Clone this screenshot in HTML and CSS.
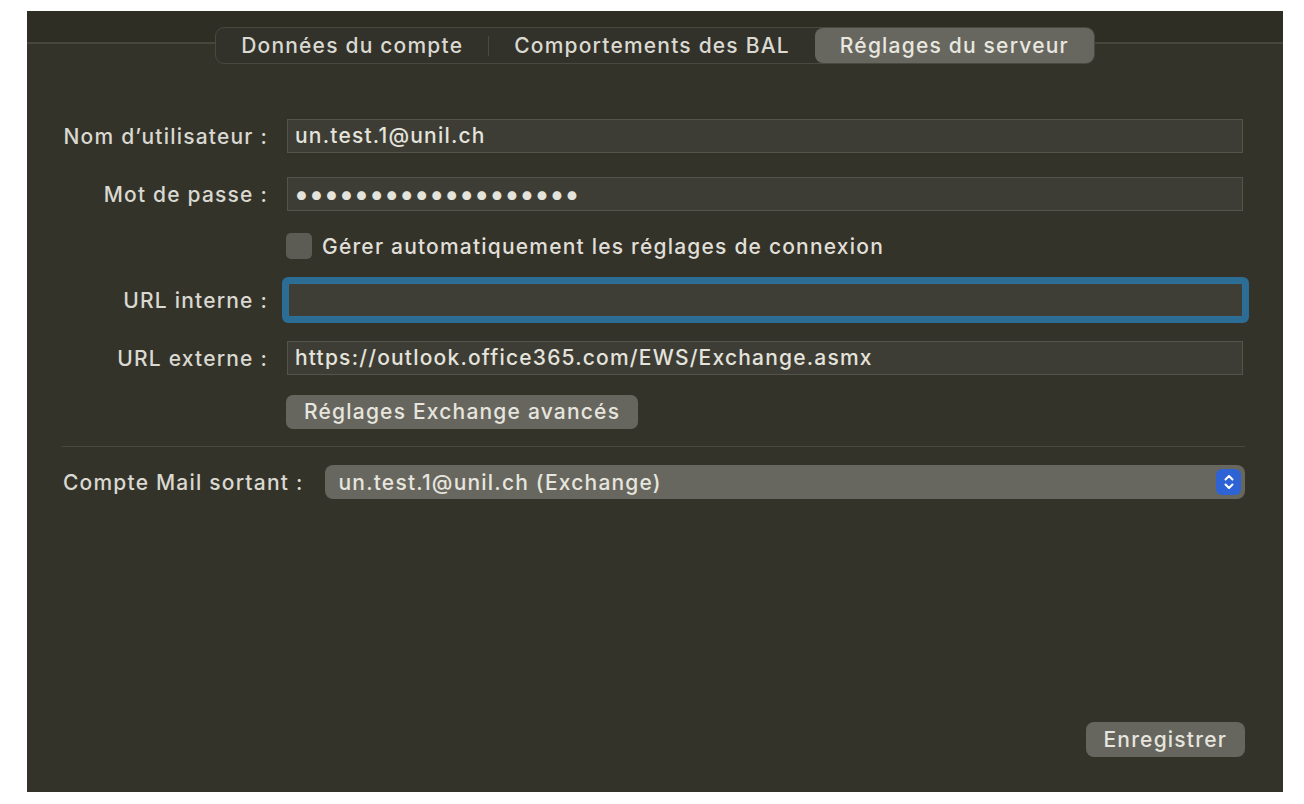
FILE: index.html
```html
<!DOCTYPE html>
<html lang="fr">
<head>
<meta charset="utf-8">
<title>Réglages du serveur</title>
<link rel="stylesheet" href="styles.css">
</head>
<body>
<div class="window">
  <div class="tabbar">
    <div class="tabline"></div>
    <div class="segmented">
      <div class="seg">Données du compte</div>
      <div class="seg-divider"></div>
      <div class="seg">Comportements des BAL</div>
      <div class="seg seg-active">Réglages du serveur</div>
    </div>
    <div class="tabline"></div>
  </div>

  <div class="form">
    <div class="row row-user">
      <div class="label">Nom d’utilisateur :</div>
      <div class="field">un.test.1@unil.ch</div>
    </div>
    <div class="row row-pass">
      <div class="label">Mot de passe :</div>
      <div class="field field-pass">•••••••••••••••••••</div>
    </div>
    <div class="row row-check">
      <div class="label"></div>
      <div class="check-wrap"><span class="checkbox"></span><span class="check-text">Gérer automatiquement les réglages de connexion</span></div>
    </div>
    <div class="row row-int">
      <div class="label">URL interne :</div>
      <div class="field field-focus"></div>
    </div>
    <div class="row row-ext">
      <div class="label">URL externe :</div>
      <div class="field">https://outlook.office365.com/EWS/Exchange.asmx</div>
    </div>
    <div class="row row-btn">
      <div class="label"></div>
      <div><span class="button">Réglages Exchange avancés</span></div>
    </div>
  </div>

  <div class="separator"></div>

  <div class="outgoing">
    <div class="out-label">Compte Mail sortant :</div>
    <div class="select">
      <span class="select-text">un.test.1@unil.ch (Exchange)</span>
      <span class="stepper">
        <svg width="12" height="18" viewBox="0 0 12 18"><path d="M2.5 6.5 L6 3 L9.5 6.5" fill="none" stroke="#ffffff" stroke-width="2" stroke-linecap="round" stroke-linejoin="round"/><path d="M2.5 11.5 L6 15 L9.5 11.5" fill="none" stroke="#ffffff" stroke-width="2" stroke-linecap="round" stroke-linejoin="round"/></svg>
      </span>
    </div>
  </div>

  <div class="footer">
    <span class="button button-save">Enregistrer</span>
  </div>
</div>
</body>
</html>
```
FILE: styles.css
```css
html, body {
  margin: 0;
  padding: 0;
  background: #ffffff;
}
body {
  font-family: Inter, "Noto Sans", "Liberation Sans", sans-serif;
  font-size: 21px;
  font-weight: 500;
  letter-spacing: 1.2px;
  color: #dcdbd4;
}
.window {
  margin: 11px 0 0 27px;
  width: 1256px;
  height: 781px;
  background: linear-gradient(#2f2e25 0, #2f2e25 32px, #34332a 32px);
  display: flex;
  flex-direction: column;
}
.tabbar {
  display: flex;
  align-items: flex-start;
  margin-top: 16px;
  height: 37px;
}
.tabline {
  flex: 1;
  height: 2px;
  margin-top: 15px;
  background: #48473e;
}
.segmented {
  display: flex;
  align-items: center;
  height: 35px;
  border: 1px solid #4a4940;
  border-radius: 9px;
  background: #33322a;
}
.seg {
  height: 35px;
  line-height: 35px;
  padding: 0 25px;
  color: #dad9d2;
}
.seg-divider {
  width: 1px;
  height: 20px;
  background: #4a4940;
}
.seg-active {
  background: #68675f;
  border-radius: 8px;
  color: #e8e7e0;
}
.form {
  display: flex;
  flex-direction: column;
  padding: 0 40px 0 35px;
}
.row {
  display: grid;
  grid-template-columns: 206px 1fr;
  column-gap: 19px;
  align-items: center;
}
.row-user { margin-top: 55px; }
.row-pass { margin-top: 24px; }
.row-check { margin-top: 22px; }
.row-int { margin-top: 24px; }
.row-ext { margin-top: 24px; }
.row-btn { margin-top: 20px; }
.label {
  text-align: right;
  color: #d9d8d1;
  white-space: nowrap;
}
.field {
  height: 32px;
  line-height: 32px;
  background: #3e3d35;
  border: 1px solid #55544b;
  padding: 0 7px;
  color: #e4e3dc;
  white-space: nowrap;
  overflow: hidden;
}
.field-pass {
  font-size: 28px;
  letter-spacing: 0.1px;
  padding-left: 6px;
}
.field-focus {
  margin-left: 1px;
  border-color: #2f6f96;
  box-shadow: 0 0 0 6px #2b6d95;
  border-radius: 2px;
  background: #3f3e36;
}
.check-wrap {
  display: flex;
  align-items: center;
  height: 26px;
  margin-left: -1px;
}
.checkbox {
  width: 26px;
  height: 26px;
  border-radius: 5px;
  background: #5d5c54;
  margin-right: 10px;
}
.check-text {
  color: #e0dfd8;
}
.button {
  display: inline-block;
  height: 34px;
  line-height: 34px;
  padding: 0 18px;
  background: #67665e;
  border-radius: 7px;
  color: #e6e5de;
  margin-left: -1px;
}
.separator {
  margin: 17px 38px 0 35px;
  height: 1px;
  background: #4a4940;
}
.outgoing {
  display: flex;
  align-items: center;
  margin: 18px 38px 0 36px;
  gap: 22px;
}
.out-label {
  color: #d9d8d1;
  white-space: nowrap;
}
.select {
  flex: 1;
  height: 34px;
  background: #68675f;
  border-radius: 8px;
  display: flex;
  align-items: center;
  padding: 0 4px 0 13px;
}
.select-text {
  flex: 1;
  color: #e6e5de;
}
.stepper {
  width: 25px;
  height: 26px;
  border-radius: 6px;
  background: #2e63d6;
  display: flex;
  align-items: center;
  justify-content: center;
}
.footer {
  display: flex;
  justify-content: flex-end;
  margin: auto 38px 35px 0;
}
.button-save {
  height: 35px;
  line-height: 35px;
  padding: 0 18px;
  border-radius: 8px;
}
```
